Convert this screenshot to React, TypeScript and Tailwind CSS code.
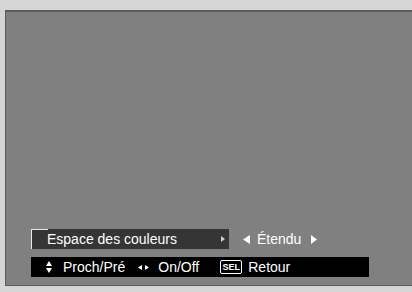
import React from "react";

const Tri = ({ dir, className }: { dir: "l" | "r" | "u" | "d"; className?: string }) => {
  const pts =
    dir === "r" ? "0,0 10,5 0,10" : dir === "l" ? "10,0 0,5 10,10" : dir === "u" ? "0,10 5,0 10,10" : "0,0 10,0 5,10";
  return (
    <svg viewBox="0 0 10 10" preserveAspectRatio="none" className={className}>
      <polygon points={pts} fill="currentColor" />
    </svg>
  );
};

export default function App() {
  return (
    <div
      className="w-[412px] h-[292px] bg-[#d5d5d5] pt-[10px] pl-[5px] overflow-hidden"
      style={{ fontFamily: '"Liberation Sans", Arial, sans-serif' }}
    >
      <div className="h-[276px] bg-[#808080] border-t-2 border-l border-b border-[#5c5c5c] flex flex-col justify-end pb-[8px] pl-[25px]">
        <div className="flex items-center h-[20px]">
          <div className="w-[198px] h-[20px] bg-[#353535] flex items-center text-white text-[14px]">
            <span className="w-[17px] self-stretch border-t border-l border-[#e8e8e8] shrink-0" />
            <span className="-ml-[1px] leading-none">Espace des couleurs</span>
            <Tri dir="r" className="w-[4px] h-[6px] ml-auto mr-[4px] text-[#cfcfcf]" />
          </div>
          <div className="flex items-center text-white text-[14px] ml-[14px]">
            <Tri dir="l" className="w-[7px] h-[9px]" />
            <span className="ml-[7px] leading-none">Étendu</span>
            <Tri dir="r" className="w-[6px] h-[9px] ml-[10px]" />
          </div>
        </div>
        <div className="mt-[8px] w-[338px] h-[20px] bg-black flex items-center text-white text-[14px]">
          <div className="ml-[15px] w-[6px] flex flex-col gap-[2px]">
            <Tri dir="u" className="w-[6px] h-[5px]" />
            <Tri dir="d" className="w-[6px] h-[5px]" />
          </div>
          <span className="ml-[11px] leading-none">Proch/Pré</span>
          <div className="ml-[13px] flex items-center gap-[3px]">
            <Tri dir="l" className="w-[4px] h-[5px]" />
            <Tri dir="r" className="w-[4px] h-[5px]" />
          </div>
          <span className="ml-[9px] leading-none">On/Off</span>
          <span className="ml-[21px] w-[22px] h-[14px] border border-white rounded-[2px] flex items-center justify-center text-[9px] font-bold leading-none">
            SEL
          </span>
          <span className="ml-[6px] leading-none">Retour</span>
        </div>
      </div>
    </div>
  );
}
